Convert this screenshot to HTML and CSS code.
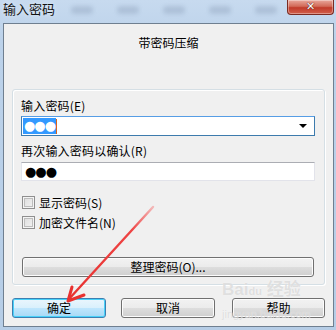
FILE: index.html
```html
<!DOCTYPE html>
<html lang="zh">
<head>
<meta charset="utf-8">
<link rel="stylesheet" href="styles.css">
</head>
<body>
<div class="window">
  <div class="titlebar">
    <span class="title">输入密码</span>
    <div class="blurs"><i></i><i></i><i></i><i></i><i></i></div>
    <div class="close"><span>✕</span></div>
  </div>
  <div class="client">
    <div class="heading">带密码压缩</div>
    <div class="group">
      <div class="label">输入密码(E)</div>
      <div class="input focus">
        <span class="sel">●●●</span><span class="caret"></span>
        <span class="drop"></span>
      </div>
      <div class="label l2">再次输入密码以确认(R)</div>
      <div class="input plain"><span class="dots">●●●</span></div>
      <div class="checks">
        <label class="check"><span class="box"></span>显示密码(S)</label>
        <label class="check"><span class="box"></span>加密文件名(N)</label>
      </div>
      <div class="btn wide">整理密码(O)...</div>
    </div>
    <div class="actions">
      <div class="btn def">确定</div>
      <div class="btn">取消</div>
      <div class="btn">帮助</div>
    </div>
  </div>
  <div class="wm">
    <div class="wm1">Bai<span class="paw">du</span> 经验</div>
    <div class="wm2">jingyan.baidu.com</div>
  </div>
  <svg class="arrow" width="336" height="330" viewBox="0 0 336 330">
    <defs>
      <linearGradient id="g" x1="153" y1="207" x2="68" y2="300" gradientUnits="userSpaceOnUse">
        <stop offset="0" stop-color="#f3b8b8"/>
        <stop offset="0.25" stop-color="#ee4444"/>
        <stop offset="1" stop-color="#e8312f"/>
      </linearGradient>
    </defs>
    <line x1="153" y1="207" x2="69" y2="299" stroke="url(#g)" stroke-width="2.4" stroke-linecap="round"/>
    <polyline points="72,287 68,301 84,295" fill="none" stroke="#e8312f" stroke-width="3" stroke-linecap="round" stroke-linejoin="round"/>
  </svg>
</div>
</body>
</html>
```
FILE: styles.css
```css
* { box-sizing: border-box; margin: 0; padding: 0; }
html, body { width: 336px; height: 330px; overflow: hidden; }
body {
  font-family: "Noto Sans CJK SC", "Liberation Sans", sans-serif;
  font-size: 12px;
  color: #000;
  background: #bcd1e9;
}
.window {
  position: relative;
  width: 336px;
  height: 330px;
  display: flex;
  flex-direction: column;
  padding: 0 2px 3px 3px;
  background: linear-gradient(#c7daef, #bcd2ea 40px, #b6cde6);
}
.titlebar {
  height: 23px;
  flex: none;
  display: flex;
  align-items: flex-start;
  position: relative;
}
.title {
  font-size: 13px;
  line-height: 16px;
  margin-top: 1px;
  color: #111;
  text-shadow: 0 0 4px #e6f0fa;
}
.blurs { display: flex; gap: 24px; margin: 6px 0 0 16px; }
.blurs i {
  display: block; width: 22px; height: 8px; border-radius: 4px;
  background: rgba(70, 90, 120, 0.18); filter: blur(2px);
}
.close {
  position: absolute;
  right: 0;
  top: 0;
  width: 47px;
  height: 15px;
  border: 1px solid #7a2b22;
  border-top: none;
  border-radius: 0 0 4px 4px;
  background: linear-gradient(#e9a89c, #d26a58 45%, #c13b2a 55%, #d1604c);
  display: flex; align-items: center; justify-content: center;
  box-shadow: inset 0 0 0 1px rgba(255,255,255,0.35);
}
.close span {
  color: #fff; font-family: "DejaVu Sans", sans-serif; font-weight: bold; font-size: 11px; line-height: 12px;
  text-shadow: 0 0 1px #5a1a12, 0 0 1px #5a1a12;
}
.client {
  flex: 1;
  background: #f0f0f0;
  border: 1px solid #6f7f90;
  display: flex;
  flex-direction: column;
}
.heading {
  text-align: center;
  line-height: 16px;
  margin-top: 11px;
  height: 16px;
}
.group {
  margin: 38px 8px 0 8px;
  height: 196px;
  border: 1px solid #d5dfe5;
  border-radius: 3px;
  box-shadow: inset 1px 1px 0 #fff, 1px 1px 0 #fff;
  padding: 8px 9px 0 8px;
  display: flex;
  flex-direction: column;
}
.label { line-height: 16px; height: 16px; letter-spacing: 0.2px; }
.input {
  margin-top: 2px;
  height: 20px;
  background: #fff;
  border: 1px solid #abadb3;
  display: flex;
  align-items: center;
  position: relative;
  padding-left: 1px;
}
.input.focus { border-color: #3d7bad; border-top-color: #569de5; }
.input.plain { height: 19px; border-color: #e2e3ea; border-top-color: #abadb3; margin-top: 3px; }
.l2 { margin-top: 7px; }
.sel {
  background: #3399ff; color: #fff; font-size: 13px; line-height: 16px;
  letter-spacing: -1px; font-family: "DejaVu Sans", sans-serif; padding: 0 1px;
}
.caret { width: 1px; height: 15px; background: #d8641b; }
.dots { font-family: "DejaVu Sans", sans-serif; font-size: 13px; letter-spacing: -1px; padding-left: 2px; line-height: 16px; }
.drop {
  position: absolute; right: 7px; top: 7px;
  width: 0; height: 0;
  border-left: 4px solid transparent; border-right: 4px solid transparent;
  border-top: 4px solid #000;
}
.checks { margin-top: 15px; display: flex; flex-direction: column; gap: 7px; padding-left: 1px; }
.check { display: flex; align-items: center; gap: 4px; height: 13px; line-height: 13px; }
.box {
  width: 13px; height: 13px; flex: none;
  border: 1px solid #8f8f8f;
  background: linear-gradient(135deg, #dcdcdc, #f4f4f4);
  box-shadow: inset 0 0 0 1px #f4f4f4, inset 0 0 0 2px #bdbdbd;
}
.btn {
  height: 20px;
  border: 1px solid #707070;
  border-radius: 3px;
  background: linear-gradient(#f2f2f2, #ebebeb 50%, #dddddd 51%, #cfcfcf);
  box-shadow: inset 0 0 0 1px #fcfcfc;
  display: flex; align-items: center; justify-content: center;
  line-height: 16px;
}
.wide { margin-top: 28px; margin-left: 1px; margin-right: 1px; }
.actions {
  display: flex;
  margin: 13px 0 0 8px;
}
.actions .btn { width: 94px; }
.actions .btn + .btn { margin-left: 15px; }
.actions .btn:last-child { margin-left: 17px; width: 93px; }
.btn.def {
  border-color: #3c7fb1;
  background: linear-gradient(#eaf6fd, #d9f0fc 50%, #bee6fd 51%, #a7d9f5);
  box-shadow: inset 0 0 0 1px #48d1f9;
}
.wm {
  position: absolute; left: 222px; top: 281px;
  color: rgba(200, 200, 200, 0.55);
  font-family: "Liberation Sans", "Noto Sans CJK SC", sans-serif;
  text-shadow: 0 0 1px rgba(255,255,255,0.8);
  pointer-events: none;
}
.wm1 { font-size: 17px; font-weight: bold; line-height: 18px; }
.paw { font-size: 11px; }
.wm2 { font-size: 11px; line-height: 12px; margin-top: 8px; }
.arrow { position: absolute; left: 0; top: 0; pointer-events: none; }
```
